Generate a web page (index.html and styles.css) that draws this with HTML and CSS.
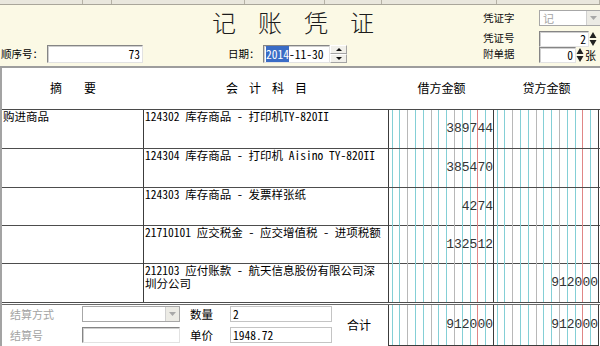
FILE: index.html
```html
<!DOCTYPE html>
<html lang="zh-CN">
<head>
  <meta charset="UTF-8">
  <title>记账凭证</title>
  <link rel="stylesheet" href="styles.css">
</head>
<body>

  <div class="toolbar">
    <span></span><span></span><span></span><span></span><span></span><span></span><span></span>
  </div>

  <div class="head">
    <div class="head-left">
      <span class="lbl">顺序号：</span>
      <div class="box num seq">73</div>
    </div>

    <div class="head-mid">
      <h1 class="title">记账凭证</h1>
      <div class="date-row">
        <span class="lbl date-lbl">日期：</span>
        <div class="box date"><span class="picked">2014</span>-11-30</div>
        <div class="updown">
          <span><i class="up"></i></span>
          <span><i class="down"></i></span>
        </div>
      </div>
    </div>

    <div class="head-right">
      <span class="lbl-s">凭证字</span>
      <div class="select word">
        <span class="val">记</span>
        <span class="drop"><svg width="7" height="4" viewBox="0 0 7 4"><path d="M0 0H7L3.5 4Z" fill="#a8a8a8"/></svg></span>
      </div>

      <span class="lbl-s">凭证号</span>
      <div class="spin-field">
        <div class="box num no">2</div>
        <svg class="spin" width="8" height="16" viewBox="0 0 8 16"><path d="M4 1L7.5 7H0.5Z M0.5 9H7.5L4 15Z" fill="#222"/></svg>
      </div>

      <span class="lbl-s">附单据</span>
      <div class="spin-field">
        <div class="box num att">0</div>
        <svg class="spin" width="8" height="16" viewBox="0 0 8 16"><path d="M4 1L7.5 7H0.5Z M0.5 9H7.5L4 15Z" fill="#222"/></svg>
        <span class="zhang">张</span>
      </div>
    </div>
  </div>

  <div class="sheet">
    <div class="sheet-head">
      <div class="hc wide"><span>摘</span><span>要</span></div>
      <div class="hc spread"><span>会</span><span>计</span><span>科</span><span>目</span></div>
      <div class="hc">借方金额</div>
      <div class="hc">贷方金额</div>
    </div>

    <div class="row">
      <div class="cell txt">购进商品</div>
      <div class="cell txt">124302 库存商品 - 打印机TY-820II</div>
      <div class="cell amount">389744</div>
      <div class="cell amount"></div>
    </div>
    <div class="row">
      <div class="cell txt"></div>
      <div class="cell txt">124304 库存商品 - 打印机 Aisino TY-820II</div>
      <div class="cell amount">385470</div>
      <div class="cell amount"></div>
    </div>
    <div class="row short">
      <div class="cell txt"></div>
      <div class="cell txt">124303 库存商品 - 发票样张纸</div>
      <div class="cell amount">4274</div>
      <div class="cell amount"></div>
    </div>
    <div class="row short">
      <div class="cell txt"></div>
      <div class="cell txt">21710101 应交税金 - 应交增值税 - 进项税额</div>
      <div class="cell amount">132512</div>
      <div class="cell amount"></div>
    </div>
    <div class="row">
      <div class="cell txt"></div>
      <div class="cell txt wrap">212103 应付账款 - 航天信息股份有限公司深<br>圳分公司</div>
      <div class="cell amount"></div>
      <div class="cell amount">912000</div>
    </div>

    <div class="foot">
      <div class="foot-left">
        <span class="lbl-g">结算方式</span>
        <div class="select settle">
          <span class="val"></span>
          <span class="drop"><svg width="7" height="4" viewBox="0 0 7 4"><path d="M0 0H7L3.5 4Z" fill="#a8a8a8"/></svg></span>
        </div>
        <span class="lbl-b">数量</span>
        <div class="box qty">2</div>
        <span class="total-lbl">合计</span>
        <span class="lbl-g">结算号</span>
        <div class="box settle-no"></div>
        <span class="lbl-b">单价</span>
        <div class="box qty">1948.72</div>
      </div>
      <div class="cell amount">912000</div>
      <div class="cell amount">912000</div>
    </div>
  </div>

</body>
</html>
```

FILE: styles.css
```css
body {
  margin: 0;
  width: 600px;
  height: 346px;
  overflow: hidden;
  background: #fff;
  font-family: "Noto Sans Mono CJK SC", "Noto Sans CJK SC", sans-serif;
  font-size: 12px;
  color: #000;
}

/* strip left from the toolbar above */
.toolbar {
  display: grid;
  grid-template-columns: 83px 29px 133px 80px 57px 115px 1fr;
  height: 4px;
  background: #e9e7dd;
  border-bottom: 1px solid #a9a69a;
}
.toolbar span {
  border-right: 1px solid #b5b2a6;
}

.head {
  display: grid;
  grid-template-columns: 150px 300px 150px;
  height: 61px;
  background: #fbf9e5;
  border-bottom: 2px solid #9d9d9d;
}

.lbl {
  font-size: 10.5px;
  line-height: 18px;
}

.box {
  box-sizing: border-box;
  height: 18px;
  background: #fff;
  border: 1px solid;
  border-color: #858585 #e2e2e2 #e2e2e2 #858585;
  box-shadow: inset 1px 1px 0 #cfcfcf;
  font-size: 11.5px;
  line-height: 16px;
  padding: 0 2px;
  white-space: nowrap;
}
.num {
  text-align: right;
}

.head-left {
  display: flex;
  align-items: flex-end;
  padding: 0 0 3px 1px;
}
.head-left .lbl {
  width: 46px;
}
.seq {
  width: 96px;
}

.head-mid {
  display: flex;
  flex-direction: column;
}
.title {
  margin: 0;
  height: 40px;
  line-height: 34px;
  padding-left: 8px;
  text-align: center;
  font-family: "Noto Sans CJK SC", sans-serif;
  font-size: 24px;
  font-weight: 300;
  letter-spacing: 22px;
  color: #1c1c1c;
}
.date-row {
  display: flex;
  padding-left: 78px;
}
.date-lbl {
  width: 35px;
}
.date {
  width: 67px;
  padding-left: 2px;
}
.picked {
  background: #3a6cc6;
  color: #fff;
}
.updown {
  display: flex;
  flex-direction: column;
  width: 17px;
  height: 18px;
}
.updown span {
  flex: 1;
  display: flex;
  align-items: center;
  justify-content: center;
  background: #f1f0ea;
  border: 1px solid;
  border-color: #fff #a3a3a3 #a3a3a3 #fff;
}
.up {
  border: 3px solid transparent;
  border-top: 0;
  border-bottom-color: #111;
}
.down {
  border: 3px solid transparent;
  border-bottom: 0;
  border-top-color: #111;
}

.head-right {
  display: grid;
  grid-template-columns: 56px auto;
  grid-template-rows: 21px 16px 16px;
  padding: 5px 0 0 33px;
  align-items: start;
}
.lbl-s {
  font-size: 10.5px;
  line-height: 11px;
  margin-top: 1px;
  color: #111;
}
.head-right > :nth-child(1) {
  margin-top: 2px;
}

.select {
  display: flex;
  box-sizing: border-box;
  height: 16px;
  background: #fff;
  border: 1px solid #a7a7a7;
}
.select .val {
  flex: 1;
  padding-left: 3px;
  font-size: 11px;
  line-height: 14px;
  color: #a5a5a5;
}
.select .drop {
  width: 13px;
  display: flex;
  align-items: center;
  justify-content: center;
  background: #ecebe5;
  border-left: 1px solid #d0d0d0;
}
.word {
  width: 62px;
}

.spin-field {
  display: flex;
  align-items: center;
}
.spin-field .box {
  height: 16px;
  line-height: 14px;
}
.no {
  width: 50px;
}
.att {
  width: 37px;
}
.zhang {
  font-size: 11px;
  margin-left: 1px;
}

/* voucher table */
.sheet {
  border-left: 2px solid #a3a3a3;
}
.sheet-head,
.row {
  display: grid;
  grid-template-columns: 142px 245px 105px 105px;
}
.sheet-head {
  box-sizing: border-box;
  height: 42px;
  border-bottom: 1px solid #4a4a4a;
  align-items: center;
  padding-bottom: 3px;
}
.hc {
  display: flex;
  justify-content: center;
  font-size: 12px;
}
.hc.wide {
  gap: 22px;
}
.hc.spread {
  gap: 11px;
}

.row {
  box-sizing: border-box;
  height: 39px;
  border-bottom: 1px solid #4d4d4d;
}
.row.short {
  height: 38px;
}
.cell {
  border-right: 1px solid #3c3c3c;
}
.txt {
  padding: 0 1px;
  font-size: 11.5px;
  line-height: 12px;
  white-space: nowrap;
}
.txt.wrap {
  line-height: 13px;
  padding-top: 0;
}

.amount {
  text-align: right;
  font-family: "Liberation Mono", monospace;
  font-size: 13px;
  line-height: 38px;
  color: #333;
  background-image:
    linear-gradient(to left, transparent 14.6px, #e08686 14.6px, #e08686 15.6px, transparent 15.6px),
    repeating-linear-gradient(to left,
      transparent 0, transparent 6.8px,
      #84cfd6 6.8px, #84cfd6 7.8px,
      transparent 7.8px, transparent 14.6px,
      #b8b8b8 14.6px, #b8b8b8 15.6px,
      transparent 15.6px, transparent 22.4px,
      #84cfd6 22.4px, #84cfd6 23.4px);
}

.foot {
  display: grid;
  grid-template-columns: 387px 105px 105px;
  margin-top: 1px;
  border-top: 1px solid #6a6a6a;
  height: 41px;
}
.foot .amount {
  box-sizing: border-box;
  height: 41px;
  line-height: 40px;
  border-bottom: 1px solid #3c3c3c;
}
.foot-left {
  display: grid;
  grid-template-columns: 80px 108px 40px 117px 1fr;
  grid-template-rows: 16px 16px;
  row-gap: 5px;
  padding-top: 1px;
  align-items: center;
  border-right: 1px solid #3c3c3c;
}
.lbl-g {
  padding-left: 8px;
  font-size: 11px;
  color: #a3a3a3;
}
.lbl-b {
  font-size: 11.5px;
}
.settle {
  width: 98px;
}
.settle-no {
  width: 98px;
  height: 16px;
}
.qty {
  width: 102px;
  height: 16px;
  line-height: 14px;
  border-color: #c4c4c4;
  box-shadow: none;
}
.total-lbl {
  grid-row: span 2;
  font-size: 12px;
}
```
